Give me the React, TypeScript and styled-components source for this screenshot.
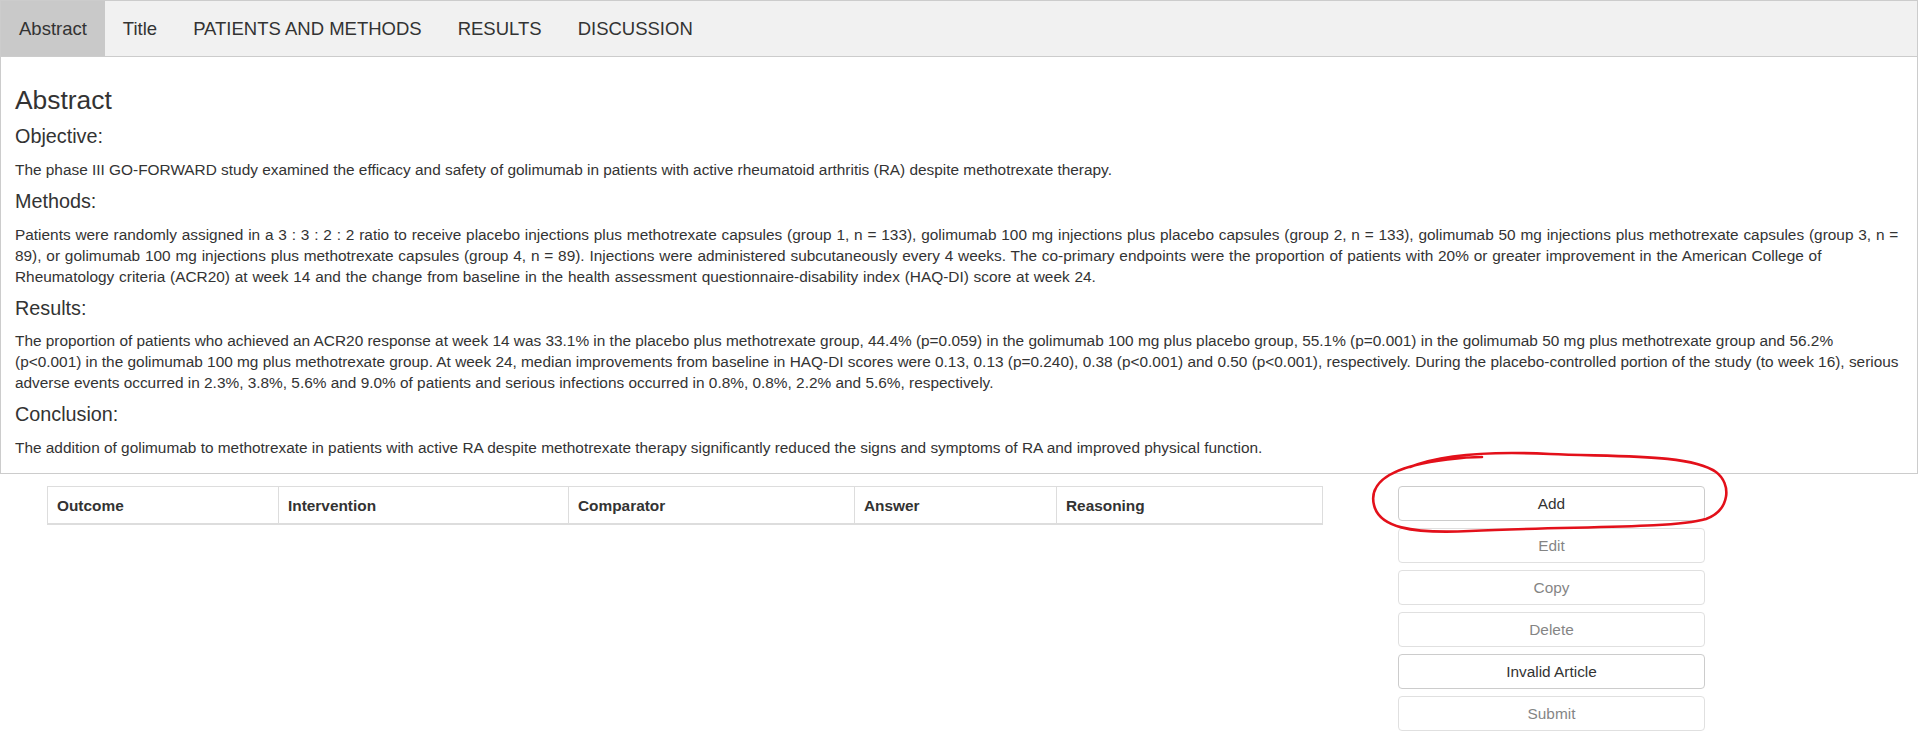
//react
import React from "react";

//styled-components
import styled, { createGlobalStyle } from "styled-components";

//global
const GlobalStyle = createGlobalStyle`
  html, body {
    margin: 0;
    padding: 0;
    background: #ffffff;
  }

  body {
    color: #333333;
    font-family: "Liberation Sans", Arial, sans-serif;
    font-size: 15.4px;
    line-height: 21px;
  }

  * {
    box-sizing: border-box;
  }
`;

//internal components
const Frame = styled.div`
  width: 1918px;
  border: 1px solid #cccccc;
`;

const TabBar = styled.div`
  height: 56px;
  display: flex;
  align-items: stretch;
  background-color: #f1f1f1;
  border-bottom: 1px solid #cccccc;
`;

const Tab = styled.div<{ $active?: boolean }>`
  padding: 0 18px;
  display: flex;
  align-items: center;

  color: #333333;
  font-size: 18.5px;
  cursor: pointer;

  background-color: ${(props) => (props.$active ? "#c9c9c9" : "transparent")};
`;

const Panel = styled.div`
  padding: 7px 14px 4px 14px;
`;

const PanelTitle = styled.h3`
  margin: 22px 0 11px 0;
  font-size: 26.4px;
  font-weight: 400;
  line-height: 1.1;
`;

const SectionTitle = styled.h4`
  margin: 11px 0;
  font-size: 19.8px;
  font-weight: 400;
  line-height: 1.1;
`;

const Paragraph = styled.p<{ $spacing?: number }>`
  margin: 0 0 11px 0;
  word-spacing: ${(props) => props.$spacing ?? 0}px;
`;

const Workspace = styled.div`
  margin-top: 12px;
  display: grid;
  grid-template-columns: 47px 1275px 76px 307px;
  align-items: start;
`;

const Table = styled.table`
  grid-column: 2;
  width: 1275px;
  border-collapse: collapse;
  table-layout: fixed;
  border: 1px solid #dddddd;
`;

const HeadCell = styled.th<{ $width: number }>`
  width: ${(props) => props.$width}px;
  padding: 8px 9px 7px 9px;
  text-align: left;
  font-weight: 700;
  border: 1px solid #dddddd;
  border-bottom: 2px solid #dddddd;
`;

const Actions = styled.div`
  grid-column: 4;
  position: relative;
  display: flex;
  flex-direction: column;
  row-gap: 7px;
`;

const ActionButton = styled.button`
  width: 307px;
  height: 35px;

  color: #333333;
  font-family: "Liberation Sans", Arial, sans-serif;
  font-size: 15.4px;

  background-color: #ffffff;
  border: 1px solid #cccccc;
  border-radius: 4px;
  cursor: pointer;

  &:disabled {
    opacity: 0.6;
    cursor: not-allowed;
  }
`;

const Scribble = styled.svg`
  position: absolute;
  left: -33px;
  top: -39px;
  width: 368px;
  height: 92px;
  overflow: visible;
  pointer-events: none;
`;

//data
const tabs = ["Abstract", "Title", "PATIENTS AND METHODS", "RESULTS", "DISCUSSION"];

const sections = [
  {
    title: "Objective:",
    spacing: 0,
    text: "The phase III GO-FORWARD study examined the efficacy and safety of golimumab in patients with active rheumatoid arthritis (RA) despite methotrexate therapy.",
  },
  {
    title: "Methods:",
    spacing: 0.55,
    text: "Patients were randomly assigned in a 3 : 3 : 2 : 2 ratio to receive placebo injections plus methotrexate capsules (group 1, n = 133), golimumab 100 mg injections plus placebo capsules (group 2, n = 133), golimumab 50 mg injections plus methotrexate capsules (group 3, n = 89), or golimumab 100 mg injections plus methotrexate capsules (group 4, n = 89). Injections were administered subcutaneously every 4 weeks. The co-primary endpoints were the proportion of patients with 20% or greater improvement in the American College of Rheumatology criteria (ACR20) at week 14 and the change from baseline in the health assessment questionnaire-disability index (HAQ-DI) score at week 24.",
  },
  {
    title: "Results:",
    spacing: 0,
    text: "The proportion of patients who achieved an ACR20 response at week 14 was 33.1% in the placebo plus methotrexate group, 44.4% (p=0.059) in the golimumab 100 mg plus placebo group, 55.1% (p=0.001) in the golimumab 50 mg plus methotrexate group and 56.2% (p<0.001) in the golimumab 100 mg plus methotrexate group. At week 24, median improvements from baseline in HAQ-DI scores were 0.13, 0.13 (p=0.240), 0.38 (p<0.001) and 0.50 (p<0.001), respectively. During the placebo-controlled portion of the study (to week 16), serious adverse events occurred in 2.3%, 3.8%, 5.6% and 9.0% of patients and serious infections occurred in 0.8%, 0.8%, 2.2% and 5.6%, respectively.",
  },
  {
    title: "Conclusion:",
    spacing: 0,
    text: "The addition of golimumab to methotrexate in patients with active RA despite methotrexate therapy significantly reduced the signs and symptoms of RA and improved physical function.",
  },
];

const columns = [
  { label: "Outcome", width: 231 },
  { label: "Intervention", width: 290 },
  { label: "Comparator", width: 286 },
  { label: "Answer", width: 202 },
  { label: "Reasoning", width: 266 },
];

const actions = [
  { label: "Add", disabled: false },
  { label: "Edit", disabled: true },
  { label: "Copy", disabled: true },
  { label: "Delete", disabled: true },
  { label: "Invalid Article", disabled: false },
  { label: "Submit", disabled: true },
];

export default function App() {
  return (
    <>
      <GlobalStyle />
      <Frame>
        <TabBar>
          {tabs.map((tab, i) => (
            <Tab key={tab} $active={i === 0}>
              {tab}
            </Tab>
          ))}
        </TabBar>
        <Panel>
          <PanelTitle>Abstract</PanelTitle>
          {sections.map((section) => (
            <React.Fragment key={section.title}>
              <SectionTitle>{section.title}</SectionTitle>
              <Paragraph $spacing={section.spacing}>{section.text}</Paragraph>
            </React.Fragment>
          ))}
        </Panel>
      </Frame>

      <Workspace>
        <Table>
          <thead>
            <tr>
              {columns.map((col) => (
                <HeadCell key={col.label} $width={col.width}>
                  {col.label}
                </HeadCell>
              ))}
            </tr>
          </thead>
        </Table>

        <Actions>
          {actions.map((action) => (
            <ActionButton key={action.label} disabled={action.disabled}>
              {action.label}
            </ActionButton>
          ))}
          {/* hand drawn marker around Add */}
          <Scribble viewBox="-5 -5 368 92">
            <path
              d="M 40 15 C 70 3, 120 -1, 180 2 C 250 5, 320 2, 346 20 C 362 32, 360 58, 336 67 C 300 77, 200 74, 100 79 C 40 82, 9 75, 4 53 C 0 37, 10 22, 46 13 C 62 9, 92 5, 112 5"
              fill="none"
              stroke="#e3101a"
              strokeWidth="2.6"
              strokeLinecap="round"
            />
          </Scribble>
        </Actions>
      </Workspace>
    </>
  );
}
